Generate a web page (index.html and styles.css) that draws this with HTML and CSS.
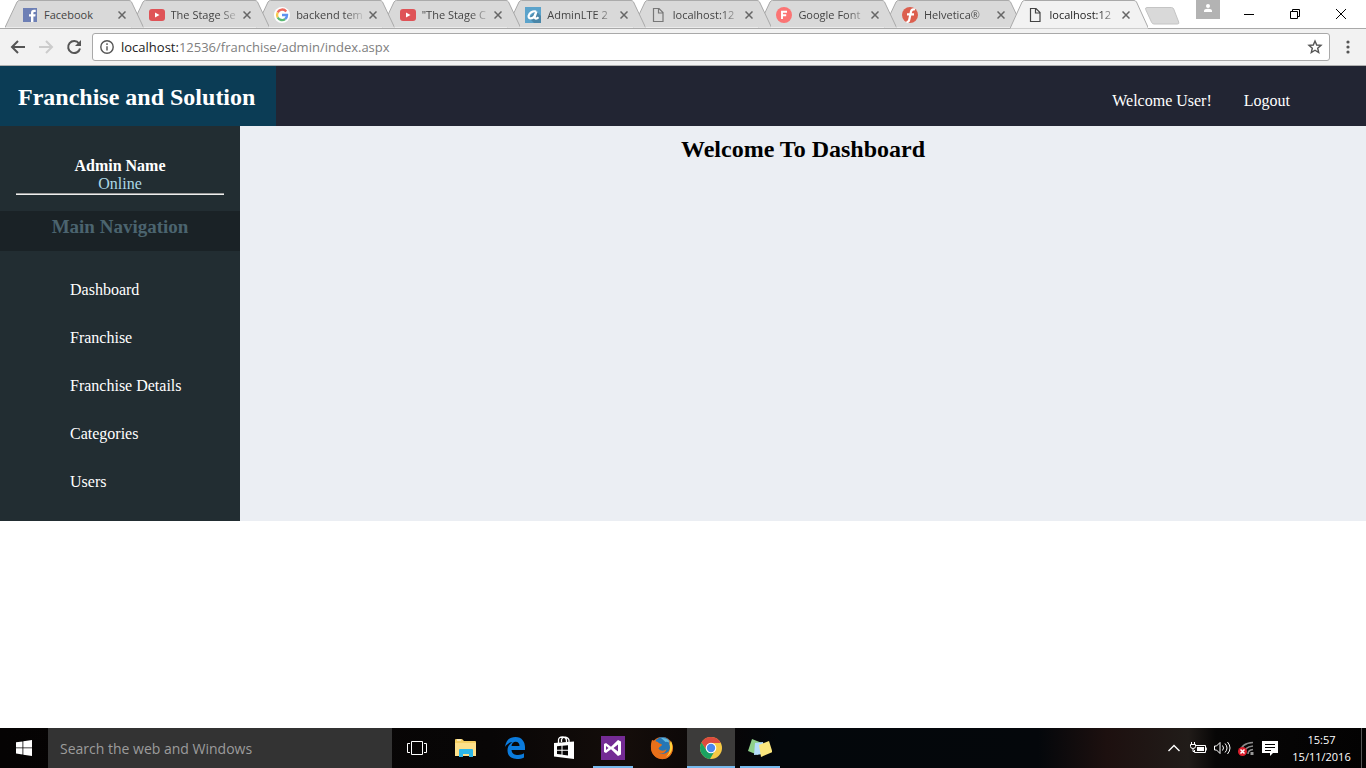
FILE: index.html
```html
<!DOCTYPE html>
<html lang="en">
<head>
<meta charset="utf-8">
<title>Franchise and Solution - Dashboard</title>
<link rel="stylesheet" href="styles.css">
</head>
<body>
<svg class="defs" aria-hidden="true">
  <symbol id="tab-shape" viewBox="0 0 138 29" preserveAspectRatio="none">
    <path d="M0 28.5 L12 2 Q13 .5 14.500 .5 H123.500 Q125 .5 126 2 L138 28.500" vector-effect="non-scaling-stroke"/>
  </symbol>
  <symbol id="x" viewBox="0 0 8 8"><path d="M.5 .5 7.500 7.500M7.500 .5 .5 7.500" fill="none" stroke="currentColor" stroke-width="1.500"/></symbol>
  <symbol id="youtube" viewBox="0 0 16 16"><rect y="2" width="16" height="12" rx="3" fill="#df5357"/><path d="M6 5.500v5l4.500-2.500z" fill="#fff"/></symbol>
  <symbol id="page" viewBox="0 0 16 16"><path d="M2.500 1.500h5.500l4 4v9h-9.500zM7.500 1.500v4.500h4.500" fill="none" stroke="currentColor" stroke-width="1.200"/></symbol>
</svg>

<header class="browser">
  <div class="tabstrip">
    <ul class="tabs">
      <li class="tab"><svg class="shape"><use href="#tab-shape"/></svg>
        <svg class="favicon" viewBox="0 0 16 16"><rect x="0" y="1" width="14" height="14" fill="#6d7fb5"/><path d="M8 15V9.500H6V7.300h2V5.800C8 3.800 9 2.800 11 2.800h1.700v2.100h-1.200c-.8 0-1.100.3-1.100 1v1.400h2.200l-.3 2.200h-1.900V15z" fill="#fff"/></svg>
        <span class="title">Facebook</span><button class="close" aria-label="Close tab"><svg><use href="#x"/></svg></button></li>
      <li class="tab"><svg class="shape"><use href="#tab-shape"/></svg>
        <svg class="favicon"><use href="#youtube"/></svg>
        <span class="title">The Stage Se</span><button class="close" aria-label="Close tab"><svg><use href="#x"/></svg></button></li>
      <li class="tab"><svg class="shape"><use href="#tab-shape"/></svg>
        <svg class="favicon" viewBox="0 0 16 16"><circle cx="8" cy="8" r="8" fill="#fff"/><g fill="none" stroke-width="2.400"><path d="M12.200 4.500A5 5 0 0 0 3.700 5.500" stroke="#ee6a5e"/><path d="M3.700 5.500a5 5 0 0 0 0 5" stroke="#f8ca4d"/><path d="M3.700 10.500a5 5 0 0 0 7.500 1.500" stroke="#5cb974"/><path d="M8 8h5a5 5 0 0 1-1.800 4" stroke="#5f93ef"/></g></svg>
        <span class="title">backend tem</span><button class="close" aria-label="Close tab"><svg><use href="#x"/></svg></button></li>
      <li class="tab"><svg class="shape"><use href="#tab-shape"/></svg>
        <svg class="favicon"><use href="#youtube"/></svg>
        <span class="title">"The Stage C</span><button class="close" aria-label="Close tab"><svg><use href="#x"/></svg></button></li>
      <li class="tab"><svg class="shape"><use href="#tab-shape"/></svg>
        <svg class="favicon" viewBox="0 0 16 16"><rect width="16" height="16" fill="#5ba3cb"/><path d="M11 4l5 5v7H9l-5-5z" fill="#4a86a8"/><path d="M11 4.500C8 3.500 4 6 3.600 9c-.2 3.500 4.200 3 6-.3L11.500 4.500 9.800 9.500c-.5 2.800 2 2.600 3.700.8" fill="none" stroke="#fff" stroke-width="2.200"/></svg>
        <span class="title">AdminLTE 2</span><button class="close" aria-label="Close tab"><svg><use href="#x"/></svg></button></li>
      <li class="tab"><svg class="shape"><use href="#tab-shape"/></svg>
        <svg class="favicon"><use href="#page"/></svg>
        <span class="title">localhost:12</span><button class="close" aria-label="Close tab"><svg><use href="#x"/></svg></button></li>
      <li class="tab"><svg class="shape"><use href="#tab-shape"/></svg>
        <svg class="favicon" viewBox="0 0 16 16"><circle cx="8" cy="8" r="8" fill="#fb7474"/><path d="M6 12V4.800h5M6 8.300h4.200" fill="none" stroke="#fff" stroke-width="1.900"/></svg>
        <span class="title">Google Font</span><button class="close" aria-label="Close tab"><svg><use href="#x"/></svg></button></li>
      <li class="tab"><svg class="shape"><use href="#tab-shape"/></svg>
        <svg class="favicon" viewBox="0 0 16 16"><circle cx="8" cy="8" r="8" fill="#dc5f4e"/><path d="M13 2.500C9.500 1.500 9 4 8.500 7L7.300 12.500C6.900 14.500 6 15.300 4.500 14.500M5 7.300h7" fill="none" stroke="#fff" stroke-width="2.200"/></svg>
        <span class="title">Helvetica®</span><button class="close" aria-label="Close tab"><svg><use href="#x"/></svg></button></li>
      <li class="tab active"><svg class="shape"><use href="#tab-shape"/></svg>
        <svg class="favicon"><use href="#page"/></svg>
        <span class="title">localhost:12</span><button class="close" aria-label="Close tab"><svg><use href="#x"/></svg></button></li>
    </ul>
    <button class="newtab" aria-label="New tab"><svg viewBox="0 0 36 18"><path d="M3 .5h24.500q1.500 0 2.200 1.500l5 13q.7 2-1.200 2H10q-1.700 0-2.400-1.700L1.700 2.500Q1 .5 3 .5z" fill="#d9d9d9" stroke="#c4c4c4"/></svg></button>
    <div class="winctl">
      <button class="person" aria-label="Profile"><svg viewBox="0 0 24 19"><circle cx="12" cy="6" r="2" fill="#fff"/><path d="M8 12v-1.200q0-2 4-2t4 2V12z" fill="#fff"/></svg></button>
      <button aria-label="Minimize"><svg viewBox="0 0 12 12"><path d="M1 6.500h10" /></svg></button>
      <button aria-label="Restore"><svg viewBox="0 0 12 12"><path d="M1.500 3.500h7v7h-7zM3.500 3V1.500h7v7H9"/></svg></button>
      <button aria-label="Close"><svg viewBox="0 0 12 12"><path d="M1 1l10 10M11 1L1 11"/></svg></button>
    </div>
  </div>
  <div class="toolbar">
    <button aria-label="Back"><svg viewBox="0 0 16 16"><path d="M15 8H2M8 2L2 8l6 6"/></svg></button>
    <button class="off" aria-label="Forward"><svg viewBox="0 0 16 16"><path d="M1 8h13M8 2l6 6-6 6"/></svg></button>
    <button aria-label="Reload"><svg viewBox="0 0 16 16"><path d="M13 4.500A6 6 0 1 0 14 9.500"/><path d="M15 1v6H9z" class="solid"/></svg></button>
    <div class="omnibox">
      <svg class="info" viewBox="0 0 14 14"><circle cx="7" cy="7" r="6.200"/><path d="M7 6.200v4.300M7 3.300v1.600"/></svg>
      <a class="url" href="#">localhost:<span>12536/franchise/admin/index.aspx</span></a>
      <button aria-label="Bookmark"><svg viewBox="0 0 16 16"><path d="M8 2l1.700 4 4.300.4-3.300 2.800 1 4.300L8 11.200l-3.700 2.300 1-4.300L2 6.400 6.300 6z"/></svg></button>
    </div>
    <button class="menu" aria-label="Menu"><svg viewBox="0 0 16 16"><g class="solid"><circle cx="8" cy="3" r="1.600"/><circle cx="8" cy="8" r="1.600"/><circle cx="8" cy="13" r="1.600"/></g></svg></button>
  </div>
</header>

<div class="page">
  <header class="top">
    <h2 class="brand">Franchise and Solution</h2>
    <nav class="usernav"><a href="#">Welcome User!</a><a href="#">Logout</a></nav>
  </header>
  <div class="body">
    <aside class="side">
      <div class="admin"><strong>Admin Name</strong><span>Online</span><hr></div>
      <h3>Main Navigation</h3>
      <ul>
        <li><a href="#">Dashboard</a></li>
        <li><a href="#">Franchise</a></li>
        <li><a href="#">Franchise Details</a></li>
        <li><a href="#">Categories</a></li>
        <li><a href="#">Users</a></li>
      </ul>
    </aside>
    <main><h1>Welcome To Dashboard</h1></main>
  </div>
</div>

<footer class="taskbar">
  <button class="start" aria-label="Start"><svg viewBox="0 0 16 16"><path d="M0 2.300L6.500 1.400V7.500H0zM7.300 1.200L16 0v7.500H7.300zM0 8.300h6.500v6.200L0 13.600zM7.300 8.300H16V16l-8.700-1.200z" fill="#fff"/></svg></button>
  <input class="search" type="text" aria-label="Search" placeholder="Search the web and Windows">
  <div class="apps">
    <button aria-label="Task view"><svg viewBox="0 0 24 24"><path d="M6.500 5.500h11v13h-11zM5 7.500H2.500v9H5M19 7.500h2.500v9H19" fill="none" stroke="#fff"/></svg></button>
    <button aria-label="File Explorer"><svg viewBox="0 0 24 24"><path d="M1 4q0-1 1-1h6l2 2h11q1 0 1 1v14H1z" fill="#f5cf63"/><path d="M1 7h21v13H1z" fill="#fde08a"/><path d="M3 4h4" stroke="#fff" /><path d="M5 21v-7q0-1 1-1h12q1 0 1 1v7h-4v-3H9v3z" fill="#2cb8ea"/></svg></button>
    <button aria-label="Edge"><svg viewBox="0 0 24 24"><path d="M2 11C3 4 7 1 12.500 1 19 1 22 6 22 11v3H8.500c.3 4 3.500 5 6.500 5 2.400 0 4.400-.7 6-1.700v4.200c-2 1-4.500 1.500-7 1.500-6 0-9.500-3.500-9.500-8.500 0-4 2-6.800 5.300-8.500C6 6.500 4 8 2 11zM8.500 10h8c0-2.700-1.300-4.300-3.800-4.300-2.400 0-3.900 1.800-4.200 4.300z" fill="#0b7bdc"/></svg></button>
    <button aria-label="Store"><svg viewBox="0 0 24 24"><path d="M2 7l20-1.500V23L2 20.500z" fill="#fff"/><path d="M6.500 7V4q0-3 4-3t4 4v1.500M9.500 6V3.500q1-3 4-2.300t3.500 3V6" fill="none" stroke="#fff" stroke-width="1.300"/><path d="M5 10.200l4.500-.4v4H5zM10.500 9.700l5.500-.5v4.600h-5.500zM5 14.800h4.500v3.800L5 18.100zM10.500 14.800H16v4.600l-5.500-.6z" fill="#080606"/></svg></button>
    <button class="open" aria-label="Visual Studio"><svg viewBox="0 0 24 24"><path d="M0 0h24v24H0z" fill="#742b94"/><path d="M3 8l2-1 5 3.800L17 4l3 1.500v13L17 20l-7-6.700L5 17l-2-1zm2 2v4l2.500-2zM17 8.500L12.500 12l4.500 3.500z" fill="#fff" fill-rule="evenodd"/></svg></button>
    <button aria-label="Firefox"><svg viewBox="0 0 24 24"><circle cx="12" cy="12" r="11" fill="#e96b16"/><circle cx="12.500" cy="9.500" r="8.500" fill="#2576b5"/><path d="M11 2q8-1 9.500 6-3-3-5-2z" fill="#63b9df"/><path d="M2 4c2 1 4 1 6 2 1 2 4 1.500 4 3-1 2-3 1.500-3.500 3.500 2 3 6 2.500 8 .5-1 5-6 5.500-8.500 3.500 4 4 11 2 12-4.500 0-3-.5-5-1.500-7.500 4 4 5 9 3 13C19 23 13 24 9 22.500 1 19.500-.5 11 2 4z" fill="#e8701a"/><path d="M21 5c3 6 1 13-5 16 3-3 5-8 3.500-13z" fill="#ffd13b"/></svg></button>
    <button class="current" aria-label="Chrome"><svg viewBox="0 0 24 24"><circle cx="12" cy="12" r="11" fill="#f6c944"/><path d="M12 12V7h9.800A11 11 0 0 0 2.500 6.500l5.200 8z" fill="#dd4b3e"/><path d="M2.500 6.500A11 11 0 0 0 11 23l5-8.500-4-2.500-4.300 2.500z" fill="#1ba261"/><circle cx="12" cy="12" r="5.300" fill="#fff"/><circle cx="12" cy="12" r="4.200" fill="#4a87ee"/></svg></button>
    <button class="open" aria-label="Sticky Notes"><svg viewBox="0 0 24 24"><path d="M4 3l10 4-4 12L0 15z" fill="#8fd08a"/><path d="M7 7l8-1 2 12-11 1z" fill="#b5dcfb"/><path d="M11 9L21 5l3.500 11L13 21z" fill="#fbe67d"/></svg></button>
  </div>
  <div class="tray">
    <button aria-label="Show hidden icons"><svg viewBox="0 0 18 18"><path d="M3.500 12L9 6.500l5.500 5.500" stroke-width="1.400"/></svg></button>
    <button aria-label="Battery"><svg viewBox="0 0 18 18"><path d="M7 6.500h9.500v7h-11V11M17.300 8.500v3M1.500 5.500h5v2q0 2-2.500 2t-2.500-2zM2.500 3v2.500M5.500 3v2.500M4 9.500v3h2"/><path d="M8 8h7v4H8z" fill="#fff" stroke="none"/></svg></button>
    <button aria-label="Volume"><svg viewBox="0 0 18 18"><path d="M1.500 7h2l3.500-3.500v11L3.500 11h-2zM9.500 6.500q2 2.500 0 5M12 4.500q4 4.500 0 9M14.500 3q5 6 0 12"/></svg></button>
    <button aria-label="Network disconnected"><svg viewBox="0 0 18 18"><g stroke="#8b8b8b" stroke-width="1.500"><path d="M3 14Q4 4 16 3.500M7 15q0-7 9-8M11 15q0-4 5-4.500"/></g><path d="M13.500 13h3v3h-3z" fill="#999" stroke="none"/><circle cx="5.500" cy="12.500" r="4.500" fill="#dc1f2d" stroke="none"/><path d="M3.500 10.500l4 4M7.500 10.500l-4 4" stroke-width="1.500"/></svg></button>
    <button aria-label="Notifications"><svg viewBox="0 0 18 18"><path d="M1 2h16v12h-5l-3 3v-3H1z" fill="#fff" stroke="none"/><path d="M4 5.500h10M4 8.500h10M4 11.500h6" stroke="#000"/></svg></button>
    <div class="clock"><time>15:57</time><time>15/11/2016</time></div>
    <span class="peek"></span>
  </div>
</footer>
</body>
</html>
```
FILE: styles.css
```css
* { box-sizing: border-box; }
body {
  margin: 0;
  min-height: 100vh;
  display: flex;
  flex-direction: column;
  background: #fff;
  font: 16px/18px "Liberation Serif", serif;
}
h1, h2, h3, ul { margin: 0; padding: 0; }
ul { list-style: none; }
a { color: inherit; text-decoration: none; }
button { border: 0; padding: 0; background: none; color: inherit; font: inherit; display: flex; align-items: center; justify-content: center; }
.defs { display: none; }

/* Browser frame */
.browser { font: 11px/16px "Open Sans", sans-serif; color: #444; }
.tabstrip { display: flex; height: 29px; align-items: flex-start; box-shadow: inset 0 -1px #a9a9a9; }
.tabs { display: flex; flex: 0 1 1148px; min-width: 0; padding-left: 5px; }
.tab { position: relative; display: flex; align-items: center; flex: 1 1 0; min-width: 0; height: 29px; padding: 1px 16px 0 18px; }
.tab:not(:last-child) { margin-right: -13px; }
.tab:nth-child(1) { z-index: 9; }
.tab:nth-child(2) { z-index: 8; }
.tab:nth-child(3) { z-index: 7; }
.tab:nth-child(4) { z-index: 6; }
.tab:nth-child(5) { z-index: 5; }
.tab:nth-child(6) { z-index: 4; }
.tab:nth-child(7) { z-index: 3; }
.tab:nth-child(8) { z-index: 2; }
.tab.active { z-index: 10; color: #222; }
.shape { position: absolute; inset: 0; width: 100%; height: 100%; z-index: -1; fill: #d9d9d9; stroke: #a9a9a9; }
.tab:not(.active) .shape { border-bottom: 1px solid #a9a9a9; }
.active .shape { fill: #f2f2f2; }
.favicon { width: 16px; height: 16px; flex: none; color: #777; }
.active .favicon { color: #444; }
.title { flex: 1; min-width: 0; margin: 0 1px 0 6px; overflow: hidden; white-space: nowrap; mask-image: linear-gradient(to right, #000 70%, transparent); }
.tab:first-child .title { mask-image: none; }
.tab:first-child .title { margin-left: 5px; }
.close { width: 12px; height: 16px; color: #666; }
.close svg { width: 8px; height: 8px; }
.newtab { flex: none; width: 36px; height: 18px; margin-top: 7px; margin-left: -4px; }
.newtab svg { width: 36px; height: 18px; }
.winctl { display: flex; margin-left: auto; padding-right: 2px; flex: none; align-items: flex-start; }
.winctl button { width: 46px; height: 27px; }
.winctl .person { width: 24px; height: 19px; margin-right: 6px; background: #b3b3b3; }
.winctl svg { width: 12px; height: 12px; fill: none; stroke: #000; }
.winctl .person svg { width: 24px; height: 19px; stroke: none; }
.toolbar { display: flex; align-items: center; height: 37px; padding: 0 6px 0 10px; background: #f2f2f2; border-bottom: 1px solid #b0b0b0; }
.toolbar svg { width: 16px; height: 16px; fill: none; stroke: #555; stroke-width: 2; }
.toolbar button { width: 16px; height: 16px; margin-right: 12px; }
.toolbar .off svg { stroke: #ccc; }
.toolbar .solid { fill: #555; stroke: none; }
.toolbar .menu { margin: 0 4px 0 10px; }
.omnibox { display: flex; align-items: center; flex: 1; height: 28px; margin-left: -2px; padding: 0 6px 0 7px; background: #fff; border: 1px solid #a9a9a9; border-radius: 3px; }
.omnibox svg { stroke-width: 1.4; }
.omnibox .info { width: 14px; height: 14px; flex: none; }
.omnibox button { margin: 0; }
.url { flex: 1; margin-left: 7px; font-size: 13px; color: #222; }
.url span { color: #808080; }

/* Admin page */
.page { flex: 1; }
.top { display: flex; justify-content: space-between; height: 60px; background: #222533; color: #fff; }
.brand { padding: 0 21px 0 18px; background: #0b3c55; font-size: 24px; line-height: 62px; }
.usernav { display: flex; gap: 32px; padding: 26px 76px 0 0; }
.body { display: flex; background: #ebeef3; }
.side { width: 240px; padding: 31px 0 15px; background: #222d32; color: #fff; }
.admin { display: flex; flex-direction: column; margin: 0 16px 16px; text-align: center; }
.admin span { color: #add8e6; }
.admin hr { width: 100%; margin: 0; border: 0; border-top: 1px solid #9a9a9a; border-bottom: 1px solid #eee; }
.side h3 { padding-bottom: 8px; margin-bottom: 15px; background: #1a2226; color: #4b646f; font-size: 19px; line-height: 32px; text-align: center; }
.side a { display: block; padding-left: 70px; line-height: 48px; }
main { flex: 1; padding-top: 9px; }
main h1 { font-size: 24px; line-height: 28px; text-align: center; }

/* Taskbar */
.taskbar { display: flex; height: 40px; background: linear-gradient(to right, #050303 0, #080606 36%, #140d0a 46%, #080506 53%, #03070b 57%, #04070b 76%, #1d100f 81%, #211c19 87%, #070606 89%, #030202 100%); color: #fff; font: 11px/17px "Open Sans", sans-serif; }
.start { width: 48px; }
.start svg { width: 16px; height: 16px; }
.search { width: 344px; padding: 0 12px; border: 0; background: #333; color: #fff; font: 14px "Open Sans", sans-serif; }
.search::placeholder { color: #9c9c9c; opacity: 1; }
.apps { display: flex; gap: 1px; padding-left: 1px; }
.apps button { width: 48px; }
.apps svg { width: 24px; height: 24px; }
.apps .open { background: linear-gradient(#76b9ed, #76b9ed) bottom / 40px 2px no-repeat; }
.apps .current { background: #3c3b3a; box-shadow: inset 0 -2px #76b9ed; }
.tray { display: flex; margin-left: auto; align-items: stretch; }
.tray button { width: 24px; }
.tray svg { width: 18px; height: 18px; fill: none; stroke: #fff; }
.clock { display: flex; flex-direction: column; align-items: center; justify-content: center; width: 79px; }
.peek { width: 5px; border-left: 1px solid #555; }
```
